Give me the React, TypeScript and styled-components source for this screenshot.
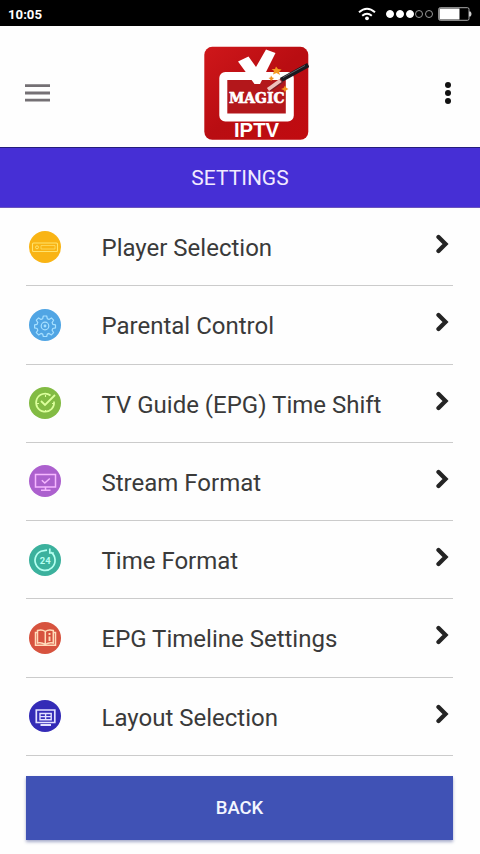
import React from "react";
import styled, { createGlobalStyle } from "styled-components";

const GlobalStyle = createGlobalStyle`
  * { box-sizing: border-box; }
  html, body { margin: 0; background: #fefefe; }
  body, button { font-family: Roboto, "Noto Sans", sans-serif; }
  svg { display: block; }
`;

const Screen = styled.div`
  width: 480px;
  height: 854px;
  display: flex;
  flex-direction: column;
  overflow: hidden;
  background: #fefefe;
`;

const StatusBar = styled.div`
  height: 26px;
  flex: none;
  display: flex;
  align-items: center;
  justify-content: space-between;
  padding: 2px 8px 0;
  background: #000;
  color: #fff;
  font-size: 13.2px;
  font-weight: 700;
`;

const StatusIcons = styled.div`
  display: flex;
  align-items: center;
  gap: 5px;
`;

const Signal = styled.div`
  display: flex;
  gap: 1.7px;
  margin-left: 5px;
`;

const Dot = styled.span<{ $on: boolean }>`
  width: 8px;
  height: 8px;
  border-radius: 50%;
  border: 1px solid ${(p) => (p.$on ? "#fff" : "#999")};
  background: ${(p) => (p.$on ? "#fff" : "transparent")};
`;

const Header = styled.header`
  height: 121px;
  flex: none;
  display: grid;
  grid-template-columns: 178px 106px 1fr;
  align-items: center;
  padding: 12px 26px 0 25px;
`;

const IconButton = styled.button<{ $end?: boolean }>`
  border: 0;
  padding: 0;
  background: none;
  justify-self: ${(p) => (p.$end ? "end" : "start")};
`;

const Banner = styled.h1`
  margin: 0;
  height: 61px;
  flex: none;
  display: flex;
  align-items: center;
  justify-content: center;
  padding-top: 1px;
  border-top: 1px solid #241c7c;
  border-bottom: 1px solid #6b55bd;
  background: #462fd5;
  color: #f1eaff;
  font-size: 21px;
  font-weight: 400;
`;

const List = styled.ul`
  margin: 0;
  padding: 0 27px 0 26px;
  list-style: none;
  flex: none;
`;

const Row = styled.li`
  height: 78.25px;
  display: flex;
  align-items: center;
  border-bottom: 1px solid #cbcbcb;
`;

const Badge = styled.span<{ $color: string }>`
  width: 32px;
  height: 32px;
  margin-left: 3px;
  flex: none;
  border-radius: 50%;
  background: ${(p) => p.$color};
`;

const Label = styled.span`
  flex: 1;
  padding: 3px 0 0 40.5px;
  color: #3a3a3a;
  font-size: 24px;
  line-height: 28px;
  white-space: nowrap;
`;

const ArrowBox = styled.span`
  width: 14px;
  margin: 0 4.5px 5px 0;
`;

const BackButton = styled.button`
  height: 64px;
  flex: none;
  margin: 20px 27px 0 26px;
  padding: 1px 0 0;
  border: 0;
  background: #4052b5;
  color: #f3f6ff;
  font-size: 18.5px;
  font-weight: 500;
  box-shadow: 0 2px 3px rgba(60, 70, 140, 0.45);
`;

const Logo = () => (
  <svg width="106" height="96" viewBox="203 45 106 96">
    <defs>
      <linearGradient id="red" x1="0" y1="0" x2="1" y2="1">
        <stop offset="0" stopColor="#cf171a" />
        <stop offset="0.5" stopColor="#b90d12" />
        <stop offset="1" stopColor="#c10b10" />
      </linearGradient>
    </defs>
    <rect x="204.3" y="46.8" width="104" height="93" rx="8" fill="url(#red)" />
    <rect x="223.3" y="76" width="66.5" height="41.5" rx="2" fill="#b3171b" stroke="#fff" strokeWidth="8" />
    <path d="M238 61.5 248.5 56.5 256 67 266 49.500 275.5 53 260 84H254.5Z" fill="#fff" />
    <text x="229" y="103" textLength="55.500" lengthAdjust="spacingAndGlyphs" fontFamily="DejaVu Serif" fontWeight="700" fontSize="14.5" fill="#fff" stroke="#fff" strokeWidth=".65">MAGIC</text>
    <text x="234" y="137" textLength="45" lengthAdjust="spacingAndGlyphs" fontFamily="Liberation Sans" fontWeight="700" fontSize="19.5" fill="#fff">IPTV</text>
    <path d="M276 66.5 278 69 281.5 69.5 279 72 280 75 276.5 73 273 74.5 274 71 271.5 69H275Z" fill="#f39a22" />
    <path d="M271 75.5 272.3 77.5 274 78 272.5 79.5 271 81 270 79 268.5 78 270.5 77.5ZM285 85.5 286.5 88 288.5 89 286.5 90 285 92 283.5 90 281 89 283.5 88Z" fill="#f0901d" />
    <path d="M281 80 308.300 65" stroke="#19191f" strokeWidth="4.6" />
    <path d="M269 89.500 282 80.500" stroke="#7a2029" strokeWidth="5" />
    <path d="M268 89.500 280.500 80.500" stroke="#efc0bd" strokeWidth="3.6" />
    <path d="M283 77.5 305 65.5" stroke="#70747f" strokeWidth=".8" />
  </svg>
);

const glyphs: Record<string, React.ReactNode> = {
  player: (
    <g stroke="#ffe36d">
      <rect x="3.500" y="12" width="25" height="8.5" rx="1" strokeWidth="1.1" />
      <circle cx="8" cy="16.300" r="1.500" strokeWidth="1" />
      <path d="M12 14.500h14v3.500H12Z" strokeWidth=".7" />
    </g>
  ),
  gear: (
    <g stroke="#a7e0ff" strokeWidth="1.2" strokeLinejoin="round">
      <path d="M14.3 7h3.4l.6 2.7 1.7.7 2.4-1.5 2.2 2.3-1.5 2.4.7 1.700 2.7.6v3l-2.7.6-.7 1.7 1.5 2.4-2.2 2.3-2.4-1.5-1.7.7-.6 2.4h-3.4l-.6-2.4-1.7-.7-2.4 1.5-2.3-2.3 1.5-2.4-.7-1.7-2.5-.6v-3l2.5-.6.7-1.7L7.3 11.2l2.300-2.3 2.4 1.5 1.7-.7Z" />
      <circle cx="16" cy="17" r="3.8" />
      <circle cx="16" cy="17" r=".8" fill="#a7e0ff" />
    </g>
  ),
  check: (
    <g stroke="#dcff9c" strokeWidth="1.7">
      <path d="M21.500 8.500A9 9 0 1 0 25 14.500" />
      <path d="m12 14 4 4L26 8" strokeWidth="1.8" />
      <path d="M16.5 8v2M8 16.5h2M16.500 23v2M23 16.500h2" strokeWidth="1.100" />
    </g>
  ),
  stream: (
    <g stroke="#f5b7ff" strokeWidth="1.5">
      <rect x="6.5" y="9.5" width="20" height="12.5" />
      <path d="M16.5 22v3M12 25.200h9.5" />
      <path d="m12.8 15.300 3 2.700 5-4.500" />
    </g>
  ),
  time: (
    <>
      <path d="M22 8.300A10 10 0 1 1 12 7.200L18 6.200M20.800 4.500v4.500h4" stroke="#b6fff1" strokeWidth="1.7" />
      <text x="16.200" y="19.6" textAnchor="middle" fontFamily="Roboto" fontSize="9.5" fontWeight="700" fill="#b6fff1">24</text>
    </>
  ),
  book: (
    <g stroke="#ffdcba" strokeWidth="1.5">
      <path d="M16.3 23V9.500Q13 7 8.500 8.500V21q4-1 7.800 1.500 3.700-2.500 8-1.500V8.500Q19.500 7 16.300 9.500" />
      <path d="M8.500 10.500H6.500v12.700h20V10.500h-2" />
      <path d="M20.500 11v2M20.500 14.500v4.500" strokeWidth="1.900" />
    </g>
  ),
  layout: (
    <g stroke="#e3e1ff">
      <path d="M7.300 10h18.500v12.500H7.300Z" strokeWidth="1.700" />
      <path d="M11 13.500h11.200v6.200H11ZM16.600 13.500v6.200M11 16.600h11.200" strokeWidth="1.400" />
      <path d="M11.500 25h10.500" strokeWidth="2" />
    </g>
  ),
};

const items = [
  { label: "Player Selection", color: "#f9b414", icon: "player" },
  { label: "Parental Control", color: "#50a5e4", icon: "gear" },
  { label: "TV Guide (EPG) Time Shift", color: "#82bb43", icon: "check" },
  { label: "Stream Format", color: "#ac60ce", icon: "stream" },
  { label: "Time Format", color: "#3bb19d", icon: "time" },
  { label: "EPG Timeline Settings", color: "#d7533e", icon: "book" },
  { label: "Layout Selection", color: "#342bb7", icon: "layout" },
];

export default function App() {
  return (
    <Screen>
      <GlobalStyle />
      <StatusBar>
        <span>10:05</span>
        <StatusIcons>
          <svg width="18" height="14" viewBox="0 0 18 14" fill="none" stroke="#fff" strokeWidth="2">
            <path d="M1 5.3q8-7 16 0M4.2 8.7q4.8-4 9.6 0" />
            <circle cx="9" cy="11.3" r="1.9" fill="#fff" stroke="none" />
          </svg>
          <Signal>
            {[true, true, true, false, false].map((on, i) => <Dot key={i} $on={on} />)}
          </Signal>
          <svg width="34" height="14" viewBox="5 0 34 14">
            <rect x="5.7" y=".7" width="30.3" height="12.6" rx="1.5" fill="none" stroke="#aaa" />
            <path d="M6.5 1.500h20v11h-20Z" fill="#fff" />
            <path d="M36 4.500h1.500q2 2.500 0 5H36Z" fill="#ccc" />
          </svg>
        </StatusIcons>
      </StatusBar>
      <Header>
        <IconButton aria-label="Menu">
          <svg width="25" height="18" viewBox="0 0 25 18" stroke="#747074" strokeWidth="2.8">
            <path d="M0 1.700h25M0 9h25M0 16.200h25" />
          </svg>
        </IconButton>
        <Logo />
        <IconButton $end aria-label="More options">
          <svg width="12" height="22" viewBox="0 0 12 22" fill="#111">
            <circle cx="6" cy="3" r="3" />
            <circle cx="6" cy="11" r="3" />
            <circle cx="6" cy="19" r="3" />
          </svg>
        </IconButton>
      </Header>
      <Banner>SETTINGS</Banner>
      <List>
        {items.map((item) => (
          <Row key={item.label}>
            <Badge $color={item.color}>
              <svg width="32" height="32" viewBox="0 0 32 32" fill="none">{glyphs[item.icon]}</svg>
            </Badge>
            <Label>{item.label}</Label>
            <ArrowBox>
              <svg width="14" height="20" viewBox="0 0 14 20" fill="none" stroke="#242424" strokeWidth="4.3" strokeLinecap="round">
                <path d="m3.500 3 7 7-7 7" />
              </svg>
            </ArrowBox>
          </Row>
        ))}
      </List>
      <BackButton>BACK</BackButton>
    </Screen>
  );
}
